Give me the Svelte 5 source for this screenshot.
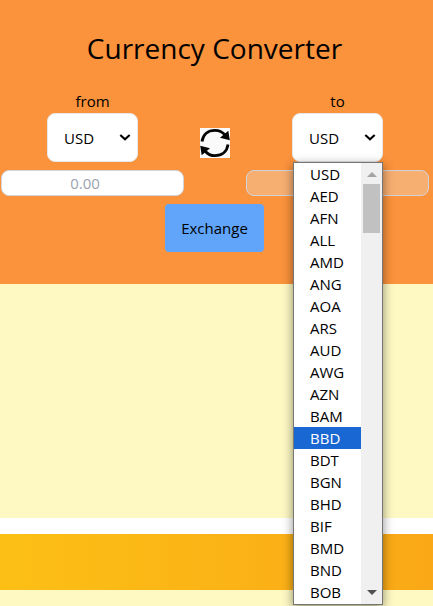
<script>
  const codes = ['USD', 'AED', 'AFN', 'ALL', 'AMD', 'ANG', 'AOA', 'ARS', 'AUD', 'AWG', 'AZN', 'BAM', 'BBD', 'BDT', 'BGN', 'BHD', 'BIF', 'BMD', 'BND', 'BOB'];
  let highlighted = $state('BBD');
</script>

{#snippet picker()}
  <button class="select">
    <span>USD</span>
    <svg width="12" height="8" viewBox="0 0 12 8"><path d="M1.3 1 6 5.300 10.700 1" fill="none" stroke="#000" stroke-width="2.1" /></svg>
  </button>
{/snippet}

<div class="page">
  <main>
    <h1>Currency Converter</h1>
    <div class="fields">
      <div class="side">
        <span class="label">from</span>
        {@render picker()}
        <input placeholder="0.00" />
      </div>
      <svg class="swap" width="30" height="30" viewBox="0 0 30 30">
        <rect width="30" height="30" fill="#fafafa" />
        <g fill="none" stroke="#050505" stroke-width="2.8">
          <path d="M2 13.500C3 6.500 8 2.300 15 2.300c4.200 0 7.600 1.800 10 4.700" />
          <path d="M28 16.500C27 23.500 22 27.700 15 27.700c-4.200 0-7.600-1.800-10-4.700" />
        </g>
        <path d="M28.300 2.800 29.800 12.300 20 9.800ZM1.700 27.200 .2 17.700 10 20.200Z" fill="#050505" />
      </svg>
      <div class="side">
        <span class="label">to</span>
        <div class="anchor">
          {@render picker()}
          <div class="menu">
            <ul>
              {#each codes as code}
                <li class:active={code === highlighted} onmouseenter={() => (highlighted = code)}>{code}</li>
              {/each}
            </ul>
            <div class="scroll">
              <svg width="10" height="5"><path d="M0 5 5 0 10 5Z" fill="#a3a3a3" /></svg>
              <div class="thumb"></div>
              <svg class="down" width="10" height="5"><path d="M0 0 5 5 10 0Z" fill="#505050" /></svg>
            </div>
          </div>
        </div>
        <input disabled />
      </div>
    </div>
    <button class="exchange">Exchange</button>
  </main>
  <section></section>
  <div class="band"></div>
  <footer></footer>
</div>

<style>
  :global(body) { margin: 0; overflow: hidden; }
  * { box-sizing: border-box; }
  .page {
    height: 606px;
    overflow: hidden;
    display: flex;
    flex-direction: column;
    background: #fff;
    color: #000;
    font: 400 15px/24px "Open Sans", "Noto Sans", sans-serif;
  }
  button, input { font: inherit; color: inherit; margin: 0; }
  main {
    height: 284px;
    flex: none;
    background: #fb923c;
    padding: 30px 4px 0 0;
    display: flex;
    flex-direction: column;
    align-items: center;
  }
  h1 { margin: 0 0 23px; font-size: 28px; line-height: 36px; font-weight: 400; }
  .fields { width: 430px; margin-right: -1px; padding: 0 1px; display: flex; justify-content: space-between; }
  .side { width: 183px; display: flex; flex-direction: column; align-items: center; }
  .label { height: 24px; }
  .anchor { position: relative; }
  .select {
    width: 91px;
    height: 49px;
    padding: 1px 6px 0 16px;
    border: 1px solid #e5e7eb;
    border-radius: 8px;
    background: #fff;
    display: flex;
    align-items: center;
    justify-content: space-between;
  }
  input {
    width: 183px;
    height: 26px;
    margin-top: 8px;
    padding: 0 15px 0 0;
    border: 1px solid #d1d5db;
    border-radius: 8px;
    background: #fff;
    text-align: center;
  }
  input::placeholder { color: #9ca3af; opacity: 1; }
  input:disabled { background: rgba(239, 239, 239, 0.3); }
  .swap { margin-top: 39px; }
  .exchange {
    width: 99px;
    height: 48px;
    margin-top: 8px;
    padding: 0;
    border: 0;
    border-radius: 4px;
    background: #60a5fa;
  }
  .menu {
    position: absolute;
    z-index: 1;
    top: 49px;
    left: 1px;
    width: 90px;
    height: 443px;
    border: 1px solid #767676;
    background: #fff;
    box-shadow: 0 3px 10px rgba(0, 0, 0, 0.45);
    display: flex;
  }
  ul { flex: 1; margin: 0; padding: 0; list-style: none; }
  li { height: 22px; padding-left: 16px; line-height: 22px; }
  li.active { background: #1967d2; color: #fff; }
  .scroll {
    width: 21px;
    padding: 9px 0 9px;
    background: #f0f0f0;
    display: flex;
    flex-direction: column;
    align-items: center;
  }
  .thumb { width: 17px; height: 49px; margin-top: 7px; background: #c1c1c1; }
  .down { margin-top: auto; }
  section { height: 234px; flex: none; background: #fef9c3; }
  .band { height: 56px; flex: none; margin-top: 16px; background: linear-gradient(to right, #fcc015, #faa817); }
  footer { flex: 1; background: #fef9c3; }
</style>
